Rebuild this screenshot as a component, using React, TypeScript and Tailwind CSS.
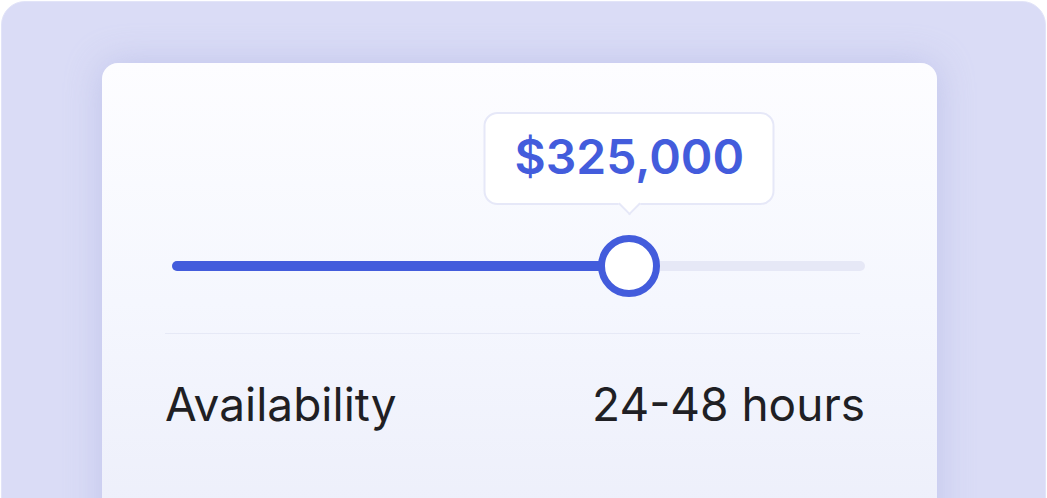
import React from 'react';

/* ------------------------------------------------------------------ */
/*  PRICE SLIDER CARD — value tooltip + availability row              */
/* ------------------------------------------------------------------ */

const pct = 66;

const App: React.FC = () => {
  return (
    <div className="w-[1047px] h-[498px] overflow-hidden bg-white pt-px px-px" style={{ fontFamily: 'Inter, "Noto Sans", sans-serif' }}>
      <div className="h-[520px] rounded-t-[24px] bg-[#dadcf6] border border-[#e2e4f8] pt-[61px] pl-[100px] pr-[108px]">
        <div className="h-[480px] rounded-t-[16px] bg-gradient-to-b from-[#fdfdff] via-[#f5f7fe] to-[#eceefa] shadow-[0_0_36px_rgba(160,166,222,0.45)] pt-[49px] pl-[63px] pr-[72px]">
          {/* Slider */}
          <div className="relative mt-[149px] ml-[7px] w-[693px] h-[10px] rounded-full bg-[#e6e8f6]">
            <div className="absolute inset-y-0 left-0 rounded-full bg-[#435cdc]" style={{ width: `${pct}%` }} />

            {/* Tooltip */}
            <div
              className="absolute bottom-[66px] -translate-x-1/2 w-[291px] h-[93px] rounded-[14px] bg-white border-2 border-[#e6e8f8] flex items-center justify-center"
              style={{ left: `${pct}%` }}
            >
              <span className="text-[48px] font-semibold text-[#435cdc] -mt-[3px]">$325,000</span>
              <div className="absolute -bottom-[9px] left-1/2 -translate-x-1/2 w-[16px] h-[16px] rotate-45 bg-white border-r-2 border-b-2 border-[#e6e8f8]" />
            </div>

            {/* Thumb */}
            <div
              className="absolute top-1/2 -translate-x-1/2 -translate-y-1/2 w-[62px] h-[62px] rounded-full bg-white border-[7px] border-[#435cdc]"
              style={{ left: `${pct}%` }}
            />
          </div>

          <div className="mt-[62px] w-[695px] border-t border-[#e6e9f6]" />

          <div className="mt-[36px] flex items-center justify-between text-[46px] text-[#1f1f24]">
            <span>Availability</span>
            <span>24-48 hours</span>
          </div>
        </div>
      </div>
    </div>
  );
};

export default App;
